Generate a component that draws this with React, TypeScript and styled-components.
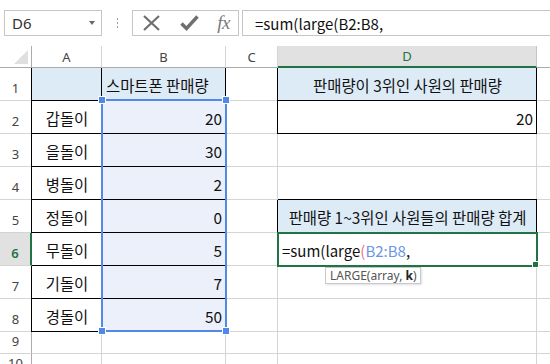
import React from "react";
import styled, { createGlobalStyle, css } from "styled-components";

const GlobalStyle = createGlobalStyle`
  html, body {
    margin: 0;
    padding: 0;
    background: #fff;
  }
  body {
    font-family: "Noto Sans", "Noto Sans CJK KR", sans-serif;
  }
`;

const GREEN = "#217346";
const GRID = "#d4d4d4";
const HEAD_LINE = "#ababab";
const RANGE_BLUE = "#5189e6";
const HEAD_FILL = "#ddebf7";
const RANGE_FILL = "#ebf0fb";

const Window = styled.div`
  width: 550px;
  height: 364px;
  overflow: hidden;
  background: #fff;
`;

/* ---------- formula bar ---------- */

const FormulaBar = styled.div`
  display: flex;
  align-items: center;
  height: 46px;
  padding: 10px 0 10px 4px;
  box-sizing: border-box;
`;

const NameBox = styled.div`
  width: 98px;
  height: 26px;
  box-sizing: border-box;
  border: 1px solid #c6c6c6;
  display: flex;
  align-items: center;
  justify-content: space-between;
  padding: 0 6px 0 7px;
  font-size: 15px;
  color: #333;
`;

const DropArrow = styled.span`
  width: 0;
  height: 0;
  border-left: 3.5px solid transparent;
  border-right: 3.5px solid transparent;
  border-top: 4px solid #6a6a6a;
`;

const Grip = styled.div`
  width: 30px;
  display: flex;
  justify-content: center;
`;

const GripDots = styled.span`
  width: 1px;
  height: 10px;
  background: repeating-linear-gradient(to bottom, #9a9a9a 0 2px, transparent 2px 4px);
`;

const ButtonGroup = styled.div`
  width: 107px;
  height: 26px;
  box-sizing: border-box;
  border: 1px solid #c6c6c6;
  display: flex;
  align-items: center;
  justify-content: space-between;
  padding: 0 8px 0 9px;
`;

const FxLabel = styled.span`
  font-family: "Liberation Serif", serif;
  font-style: italic;
  font-size: 19px;
  color: #7a7a7a;
  letter-spacing: -0.5px;
  line-height: 1;
  margin-top: -2px;
`;

const FormulaInput = styled.div`
  flex: 1;
  height: 26px;
  box-sizing: border-box;
  margin-left: 3px;
  margin-right: -4px;
  border: 1px solid #c6c6c6;
  display: flex;
  align-items: center;
  padding-left: 12px;
  font-family: "Noto Sans CJK KR", sans-serif;
  font-size: 15px;
  color: #111;
`;

/* ---------- sheet ---------- */

const Sheet = styled.div`
  display: grid;
  grid-template-columns: 32px 70px 124px 52px 259px 1fr;
  grid-template-rows: 22px repeat(8, 33px) 22px 22px;
`;

type Place = { $row: number; $col: number };

const placed = css<Place>`
  grid-row: ${(p) => p.$row};
  grid-column: ${(p) => p.$col};
  box-sizing: border-box;
  min-width: 0;
`;

const Corner = styled.div<Place>`
  ${placed};
  border-right: 1px solid ${HEAD_LINE};
  border-bottom: 1px solid ${HEAD_LINE};
  display: flex;
  align-items: flex-end;
  justify-content: flex-end;
  padding: 0 3px 3px 0;
`;

const CornerTriangle = styled.span`
  width: 0;
  height: 0;
  border-left: 14px solid transparent;
  border-bottom: 14px solid #dfdfdf;
`;

const ColHeader = styled.div<Place & { $active?: boolean; $last?: boolean }>`
  ${placed};
  display: flex;
  align-items: center;
  justify-content: center;
  font-size: 13px;
  color: #444;
  border-right: ${(p) => (p.$last ? "none" : `1px solid ${GRID}`)};
  border-bottom: 1px solid ${HEAD_LINE};
  ${(p) =>
    p.$active &&
    css`
      background: #e1e1e1;
      color: ${GREEN};
      border-bottom: 2px solid ${GREEN};
      border-right-color: #c6c6c6;
    `}
`;

const RowHeader = styled.div<Place & { $active?: boolean }>`
  ${placed};
  display: flex;
  align-items: flex-end;
  justify-content: center;
  padding-bottom: 3px;
  font-size: 13px;
  color: #444;
  border-right: 1px solid ${HEAD_LINE};
  border-bottom: 1px solid ${GRID};
  ${(p) =>
    p.$active &&
    css`
      background: #e1e1e1;
      color: ${GREEN};
      font-weight: 600;
      border-right: 2px solid ${GREEN};
    `}
`;

type CellProps = Place & {
  $align?: "left" | "center" | "right";
  $fill?: string;
  $black?: boolean;
  $leftBlack?: boolean;
  $topBlack?: boolean;
  $last?: boolean;
};

const justify = { left: "flex-start", center: "center", right: "flex-end" };

const Cell = styled.div<CellProps>`
  ${placed};
  display: flex;
  align-items: flex-end;
  justify-content: ${(p) => justify[p.$align || "left"]};
  padding: 0 3px 5px 4px;
  font-family: "Noto Sans CJK KR", sans-serif;
  font-size: 15.4px;
  line-height: 19px;
  color: #111;
  white-space: nowrap;
  background: ${(p) => p.$fill || "#fff"};
  border-right: ${(p) => (p.$last ? "none" : `1px solid ${p.$black ? "#000" : GRID}`)};
  border-bottom: 1px solid ${(p) => (p.$black ? "#000" : GRID)};
  box-shadow: ${(p) =>
    [p.$leftBlack && "-1px 0 0 0 #000", p.$topBlack && "0 -1px 0 0 #000"]
      .filter(Boolean)
      .join(", ") || "none"};
`;

const ActiveCell = styled(Cell)`
  position: relative;
  outline: 2px solid ${GREEN};
  outline-offset: -1px;
  font-size: 15px;
`;

const FillHandle = styled.span`
  position: absolute;
  right: -3px;
  bottom: -3px;
  width: 5px;
  height: 5px;
  background: ${GREEN};
  border: 1px solid #fff;
`;

const RefParen = styled.span`
  color: #ef7676;
`;

const RefRange = styled.span`
  color: #6b95ea;
`;

const Tooltip = styled.div`
  position: absolute;
  left: 47px;
  top: calc(100% + 2px);
  z-index: 3;
  height: 17px;
  box-sizing: border-box;
  padding: 0 4px;
  display: flex;
  align-items: center;
  background: #fff;
  border: 1px solid #c8c8c8;
  box-shadow: 1px 1px 2px rgba(0, 0, 0, 0.12);
  font-family: "Noto Sans", sans-serif;
  font-size: 12px;
  color: #555;
`;

const TipArg = styled.b`
  color: #222;
  margin-left: 3px;
`;

const RangeBox = styled.div`
  grid-row: 3 / 10;
  grid-column: 3;
  position: relative;
  z-index: 1;
  margin: -2px -1px 0 -1px;
  border: 2px solid ${RANGE_BLUE};
  pointer-events: none;
`;

const Handle = styled.span<{ $x: "left" | "right"; $y: "top" | "bottom" }>`
  position: absolute;
  ${(p) => p.$x}: -4px;
  ${(p) => p.$y}: -4px;
  width: 6px;
  height: 6px;
  background: ${RANGE_BLUE};
  box-shadow: 0 0 0 1px #fff;
`;

const names = ["갑돌이", "을돌이", "병돌이", "정돌이", "무돌이", "기돌이", "경돌이"];
const sales = [20, 30, 2, 0, 5, 7, 50];
const columns = ["A", "B", "C", "D", ""];

const CancelIcon = () => (
  <svg width="19" height="16" viewBox="0 0 19 16">
    <path d="M2 1 L17 15 M17 1 L2 15" stroke="#6f6f6f" strokeWidth="2.2" fill="none" />
  </svg>
);

const EnterIcon = () => (
  <svg width="19" height="16" viewBox="0 0 19 16">
    <path d="M1.5 8.5 L6.5 13.5 L17.5 1.5" stroke="#6f6f6f" strokeWidth="3.4" fill="none" strokeLinejoin="miter" />
  </svg>
);

const App = () => {
  const sheetRows = Array.from({ length: 10 }, (_, i) => i + 1);

  const renderD = (r: number, gr: number) => {
    if (r === 1)
      return (
        <Cell key="d" $row={gr} $col={5} $align="center" $fill={HEAD_FILL} $black $leftBlack>
          판매량이 3위인 사원의 판매량
        </Cell>
      );
    if (r === 2)
      return (
        <Cell key="d" $row={gr} $col={5} $align="right" $black $leftBlack>
          20
        </Cell>
      );
    if (r === 5)
      return (
        <Cell key="d" $row={gr} $col={5} $align="center" $fill={HEAD_FILL} $black $leftBlack $topBlack>
          판매량 1~3위인 사원들의 판매량 합계
        </Cell>
      );
    if (r === 6)
      return (
        <ActiveCell key="d" $row={gr} $col={5}>
          =sum(large<RefParen>(</RefParen>
          <RefRange>B2:B8</RefRange>,
          <FillHandle />
          <Tooltip>
            LARGE(array,<TipArg>k</TipArg>)
          </Tooltip>
        </ActiveCell>
      );
    return <Cell key="d" $row={gr} $col={5} />;
  };

  return (
    <Window>
      <GlobalStyle />
      <FormulaBar>
        <NameBox>
          D6
          <DropArrow />
        </NameBox>
        <Grip>
          <GripDots />
        </Grip>
        <ButtonGroup>
          <CancelIcon />
          <EnterIcon />
          <FxLabel>fx</FxLabel>
        </ButtonGroup>
        <FormulaInput>=sum(large(B2:B8,</FormulaInput>
      </FormulaBar>

      <Sheet>
        <Corner $row={1} $col={1}>
          <CornerTriangle />
        </Corner>
        {columns.map((c, i) => (
          <ColHeader key={i} $row={1} $col={i + 2} $active={c === "D"} $last={i === 4}>
            {c}
          </ColHeader>
        ))}

        {sheetRows.map((r) => {
          const gr = r + 1;
          const inTable = r <= 8;
          const inRange = r >= 2 && r <= 8;
          return (
            <React.Fragment key={r}>
              <RowHeader $row={gr} $col={1} $active={r === 6}>
                {r}
              </RowHeader>
              <Cell
                $row={gr}
                $col={2}
                $align="center"
                $fill={r === 1 ? HEAD_FILL : undefined}
                $black={inTable}
                $leftBlack={inTable && r !== 6}
              >
                {inRange ? names[r - 2] : ""}
              </Cell>
              <Cell
                $row={gr}
                $col={3}
                $align={r === 1 ? "left" : "right"}
                $fill={r === 1 ? HEAD_FILL : inRange ? RANGE_FILL : undefined}
                $black={inTable}
              >
                {r === 1 ? "스마트폰 판매량" : inRange ? sales[r - 2] : ""}
              </Cell>
              <Cell $row={gr} $col={4} />
              {renderD(r, gr)}
              <Cell $row={gr} $col={6} $last />
            </React.Fragment>
          );
        })}

        <RangeBox>
          <Handle $x="left" $y="top" />
          <Handle $x="right" $y="top" />
          <Handle $x="left" $y="bottom" />
          <Handle $x="right" $y="bottom" />
        </RangeBox>
      </Sheet>
    </Window>
  );
};

export default App;
